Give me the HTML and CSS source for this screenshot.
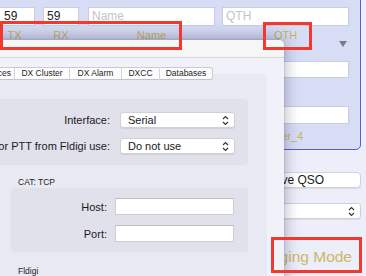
FILE: index.html
```html
<!DOCTYPE html>
<html>
<head>
<meta charset="utf-8">
<link rel="stylesheet" href="styles.css">
</head>
<body>
<div class="desk">
  <div class="bgwin">
    <div class="panel">
      <div class="row-inputs">
        <div class="fld w1">59</div>
        <div class="fld w2">59</div>
        <div class="fld w3 ph">Name</div>
        <div class="fld w4 ph">QTH</div>
      </div>
      <div class="row-labels">
        <span class="lbl w1">TX</span>
        <span class="lbl w2">RX</span>
        <span class="lbl w3">Name</span>
        <span class="lbl w4">QTH</span>
      </div>
      <div class="col-right">
        <div class="tri"></div>
        <div class="fld c-in1"></div>
        <div class="fld c-in2"></div>
        <div class="lbl c-lbl">User_4</div>
      </div>
    </div>
    <div class="lower">
      <div class="btn">Save QSO</div>
      <div class="popup lower-pop">
        <span></span>
        <svg class="chev" width="7" height="11" viewBox="0 0 7 11"><path d="M1 4 L3.5 1.5 L6 4 M1 7 L3.5 9.5 L6 7" fill="none" stroke="#333" stroke-width="1.1"/></svg>
      </div>
      <div class="mode">Logging Mode</div>
    </div>
  </div>

  <div class="win">
    <div class="titlebar"></div>
    <div class="content">
      <div class="tabs">
        <div class="tab t0">Interfaces</div>
        <div class="tab t1">DX Cluster</div>
        <div class="tab t2">DX Alarm</div>
        <div class="tab t3">DXCC</div>
        <div class="tab t4">Databases</div>
      </div>
      <div class="group">
        <div class="box box1">
          <div class="flabel">Interface:</div>
          <div class="popup"><span>Serial</span>
            <svg class="chev" width="7" height="11" viewBox="0 0 7 11"><path d="M1 4 L3.5 1.5 L6 4 M1 7 L3.5 9.5 L6 7" fill="none" stroke="#333" stroke-width="1.1"/></svg>
          </div>
          <div class="flabel">For PTT from Fldigi use:</div>
          <div class="popup"><span>Do not use</span>
            <svg class="chev" width="7" height="11" viewBox="0 0 7 11"><path d="M1 4 L3.5 1.5 L6 4 M1 7 L3.5 9.5 L6 7" fill="none" stroke="#333" stroke-width="1.1"/></svg>
          </div>
        </div>
        <div class="caption cap1">CAT: TCP</div>
        <div class="box box2">
          <div class="flabel">Host:</div>
          <div class="tfield"></div>
          <div class="flabel">Port:</div>
          <div class="tfield"></div>
        </div>
        <div class="caption cap2">Fldigi</div>
      </div>
    </div>
  </div>

  <div class="mark m1"></div>
  <div class="mark m2"></div>
  <div class="mark m3"></div>
</div>
</body>
</html>
```
FILE: styles.css
```css
* { box-sizing: border-box; }
html, body { margin: 0; padding: 0; }
body {
  width: 366px;
  height: 276px;
  overflow: hidden;
  background: #eceefa;
  font-family: "Liberation Sans", Arial, sans-serif;
  color: #1c1c1c;
}
.desk { position: relative; width: 366px; height: 276px; overflow: hidden; }

/* background window */
.panel {
  margin: -10px 5px 0 -10px;
  height: 160px;
  border: 1px solid #5a5ade;
  border-radius: 5px;
  background: #d8ddf6;
  display: flex;
  flex-direction: column;
}
.row-inputs, .row-labels { display: flex; padding-left: 3px; }
.row-inputs { margin-top: 16px; }
.fld {
  height: 19px;
  background: #fff;
  border: 1px solid #c9cddd;
  font-size: 12px;
  line-height: 17px;
  padding-left: 3px;
  color: #222;
}
.ph { color: #c3c3c8; }
.w1 { width: 41px; }
.w2 { width: 36px; margin-left: 8px; }
.w3 { width: 127px; margin-left: 9px; }
.w4 { width: 127px; margin-left: 7px; }
.row-inputs .w1 { padding-left: 9px; }
.row-labels { margin-top: 3px; }
.lbl {
  font-size: 11px;
  line-height: 12px;
  color: #c9b45c;
  text-align: center;
}
.col-right {
  align-self: flex-end;
  margin-right: 11px;
  width: 127px;
  display: flex;
  flex-direction: column;
}
.tri {
  align-self: flex-end;
  margin-right: 2px;
  width: 0; height: 0;
  border-left: 4px solid transparent;
  border-right: 4px solid transparent;
  border-top: 6px solid #7c7c84;
}
.c-in1 { margin-top: 14px; height: 17px; }
.c-in2 { margin-top: 28px; height: 18px; }
.c-lbl { margin-top: 6px; }

.lower { display: flex; flex-direction: column; align-items: flex-end; padding-right: 5px; }
.btn {
  margin-top: 22px;
  width: 136px;
  height: 16px;
  padding-left: 5px;
  background: #fff;
  border: 1px solid #d2d2da;
  border-radius: 4px;
  box-shadow: 0 1px 1px rgba(0,0,0,0.08);
  font-size: 12px;
  line-height: 14px;
  text-align: center;
  color: #1a1a1a;
}
.lower-pop { margin-top: 15px; width: 136px; }
.mode {
  margin-top: 28px;
  margin-right: 9px;
  font-size: 15.5px;
  line-height: 19px;
  color: #cdb865;
}

/* popup / fields */
.popup {
  height: 16px;
  background: #fff;
  border: 1px solid #d0d0d8;
  border-radius: 3px;
  box-shadow: 0 1px 1px rgba(0,0,0,0.08);
  display: flex;
  align-items: center;
  justify-content: space-between;
  padding: 0 5px 0 7px;
  font-size: 11px;
  color: #1a1a1a;
}
.chev { display: block; }
.tfield {
  height: 17px;
  background: #fff;
  border: 1px solid #cdcdd4;
  border-top-color: #bdbdc5;
}

/* front window */
.win {
  position: absolute;
  left: -60px;
  top: 40px;
  width: 344px;
  height: 260px;
  background: #f1f1f9;
  border-radius: 5px 5px 0 0;
  box-shadow: 0 -2px 16px rgba(30,30,70,0.38), 0 0 2px rgba(30,30,70,0.25);
}
.titlebar {
  height: 18px;
  background: #f6f6f7;
  border-bottom: 1px solid #d6d6de;
  border-radius: 5px 5px 0 0;
}
.content { padding-top: 9px; }
.tabs {
  position: relative;
  z-index: 1;
  display: flex;
  margin-left: 16px;
  height: 13px;
}
.tab {
  height: 13px;
  background: #fcfcfd;
  border-top: 1px solid #cbcbd3;
  border-bottom: 1px solid #c2c2ca;
  border-left: 1px solid #d4d4dc;
  font-size: 8.5px;
  line-height: 11px;
  text-align: center;
  color: #1e1e1e;
}
.t0 { width: 58px; text-align: right; padding-right: 3px; }
.t1 { width: 55px; }
.t2 { width: 52px; }
.t3 { width: 38px; }
.t4 { width: 54px; border-right: 1px solid #cbcbd3; border-radius: 0 3px 3px 0; }
.group {
  margin: -6px 17px 0 10px;
  height: 240px;
  background: #e9e9f3;
  border-radius: 4px;
  padding: 25px 19px 0 19px;
}
.box {
  background: #e1e1eb;
  border-radius: 4px;
  display: grid;
}
.box1 {
  grid-template-columns: 141px 115px;
  column-gap: 10px;
  row-gap: 10px;
  grid-auto-rows: 16px;
  padding: 13px 13px 11px 0;
}
.box2 {
  margin-left: 42px;
  grid-template-columns: 96px 119px;
  column-gap: 8px;
  row-gap: 10px;
  grid-auto-rows: 17px;
  padding: 10px 14px 10px 0;
}
.flabel {
  font-size: 11px;
  text-align: right;
  align-self: center;
  white-space: nowrap;
  color: #1a1a1a;
}
.caption {
  font-size: 8.5px;
  line-height: 10px;
  margin-left: 49px;
  color: #1e1e1e;
}
.cap1 { margin-top: 12px; margin-bottom: 1px; }
.cap2 { margin-top: 14px; }

/* annotation boxes */
.mark {
  position: absolute;
  border: 3px solid #f2392e;
  z-index: 5;
}
.m1 { left: 0; top: 21px; width: 182px; height: 29px; }
.m2 { left: 263px; top: 22px; width: 49px; height: 28px; }
.m3 { left: 271px; top: 237px; width: 91px; height: 36px; }
```
